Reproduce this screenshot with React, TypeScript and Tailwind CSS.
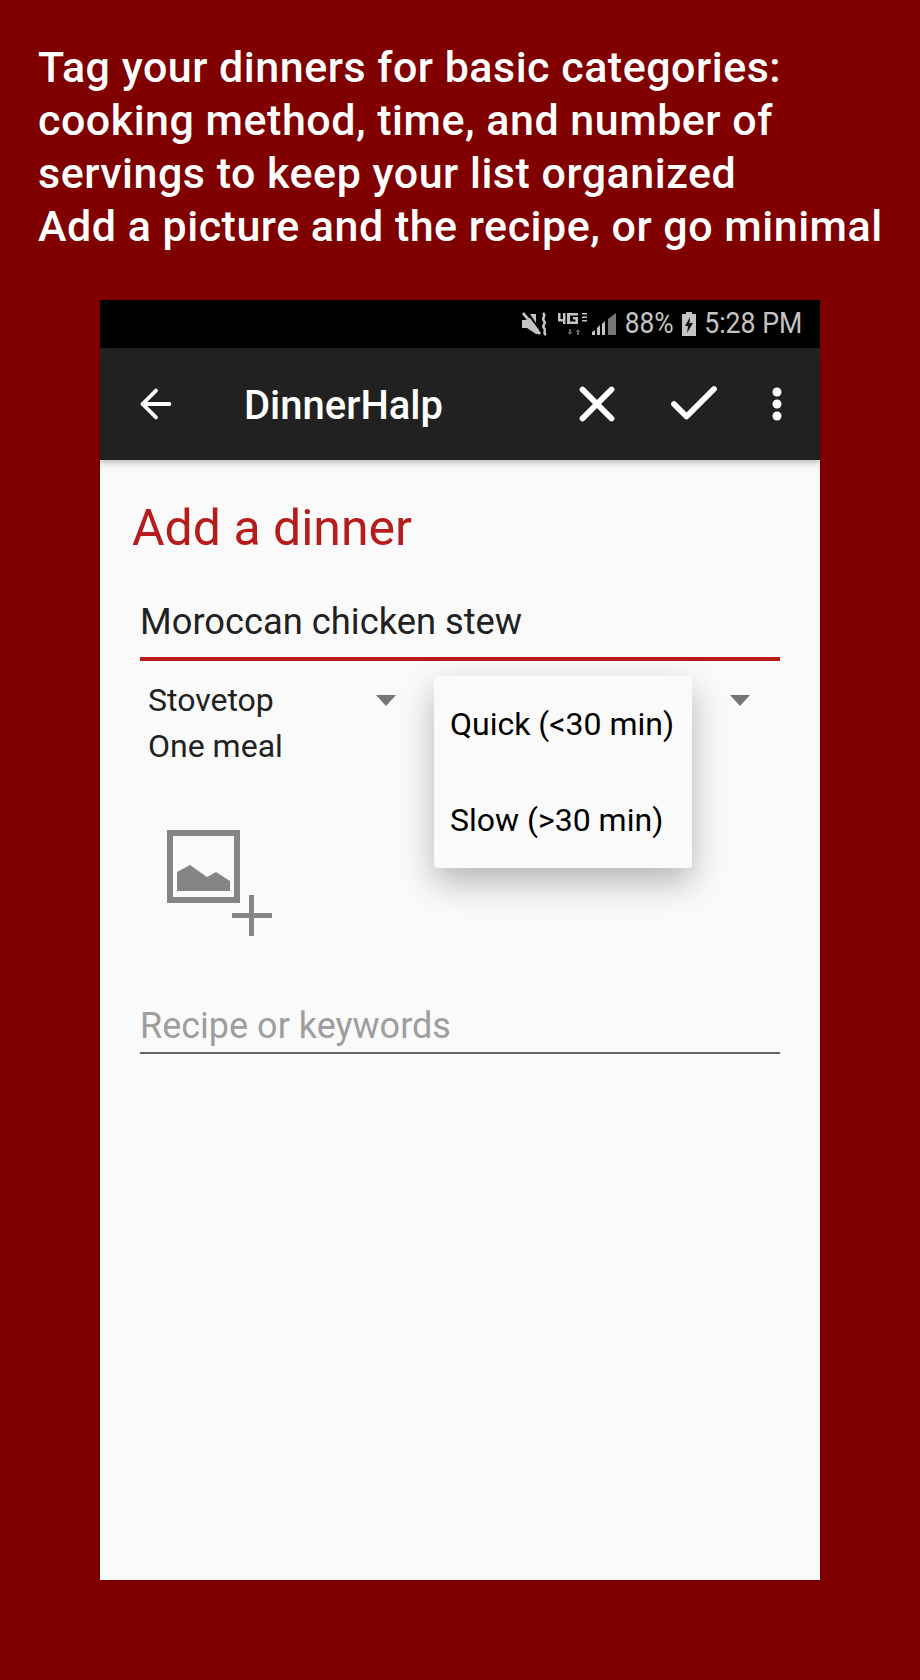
import { ArrowLeft, Check, X } from "lucide-react";

const roboto = "font-['Roboto',sans-serif]";

function Caret() {
  return <div className="w-0 h-0 border-x-[10px] border-x-transparent border-t-[11px] border-t-[#757575]" />;
}

function StatusIcons() {
  return (
    <svg width="96" height="25" viewBox="0 0 96 25" fill="#c4c4c4">
      {/* muted speaker */}
      <path d="M1 8h5l3-2 9 12v4h-3l-9-6H1z" />
      <path d="M9 2h6v9zM3 0l17 21-2 2L1 2z" />
      <path d="M22 1c4 3-2 5 1 8s-3 4 0 7-2 4 2 7" fill="none" stroke="#c4c4c4" strokeWidth="2.500" />
      {/* 4G LTE */}
      <path d="M37 1h2.500v6h2.500V1h2.500v11H42V9.500h-5z" />
      <path d="M46 1h11v2.500h-8v6h5.500V7.500H52V5h5v7H46z" />
      <path d="M61 1h5v1.500h-5zM61 4.500h5V6h-5zM61 8h5v1.500h-5z" />
      <path d="M49 23l-2.500-3H48v-3h2v3h1.500zM57 17l2.500 3H58v3h-2v-3h-1.500z" fill="#666" />
      {/* signal */}
      <path d="M71 23v-3l3-2v5zM76 23v-7l3-3v10zM81 23V12l3-3v14z" />
      <path d="M87 23V7l8-6v22z" fill="#777" />
    </svg>
  );
}

function BatteryIcon() {
  return (
    <svg width="16" height="24" viewBox="0 0 16 24" fill="#c4c4c4">
      <path d="M5 0h6v2h4v22H1V2h4z" />
      <path d="M9 5l-5 9h3l-1 7 6-10H8.500z" fill="#111" />
    </svg>
  );
}

function AddImageIcon() {
  return (
    <svg width="106" height="106" viewBox="0 0 106 106" fill="#858585">
      <path d="M0 0h73v73H0zM6 6v61h61V6z" fillRule="evenodd" />
      <path d="M10 42l13-7 17 12 9-5 14 9v10H10z" />
      <path d="M65 83h40v5H65zM82 65h5v41h-5z" />
    </svg>
  );
}

export default function App() {
  return (
    <div className={`${roboto} w-[920px] h-[1680px] bg-[#800000] flex flex-col overflow-hidden`}>
      <div className="pt-[41px] pl-[38px] text-[43px] leading-[53px] font-medium text-white tracking-[0.5px] whitespace-nowrap h-[300px]">
        <p>Tag your dinners for basic categories:</p>
        <p>cooking method, time, and number of</p>
        <p>servings to keep your list organized</p>
        <p>Add a picture and the recipe, or go minimal</p>
      </div>

      <div className="mx-[100px] h-[1280px] bg-[#fafafa] flex flex-col relative">
        {/* status bar */}
        <div className="h-[48px] bg-black flex items-center justify-end pr-[18px] text-[30px] text-[#c4c4c4] whitespace-nowrap">
          <StatusIcons />
          <span className="ml-[9px] w-[48px] flex justify-end leading-none pb-[2px]">
            <span className="scale-x-[0.88] origin-right">88%</span>
          </span>
          <div className="ml-[7px]">
            <BatteryIcon />
          </div>
          <span className="ml-[7px] w-[98px] flex justify-end leading-none pb-[2px]">
            <span className="scale-x-[0.89] origin-right">5:28 PM</span>
          </span>
        </div>

        {/* toolbar */}
        <div className="h-[112px] bg-[#212121] flex items-center text-white shadow-[0_3px_6px_rgba(0,0,0,0.25)]">
          <ArrowLeft className="ml-[33px] w-[46px] h-[46px]" strokeWidth={2} />
          <span className="ml-[65px] text-[40px] font-medium leading-none pt-[4px]">DinnerHalp</span>
          <X className="ml-[125px] w-[58px] h-[58px]" strokeWidth={2.4} />
          <Check className="ml-[38px] w-[60px] h-[60px]" strokeWidth={2.3} />
          <svg className="ml-[48px]" width="10" height="36" viewBox="0 0 10 36" fill="#fff">
            <circle cx="5" cy="6" r="4.500" />
            <circle cx="5" cy="18" r="4.500" />
            <circle cx="5" cy="30" r="4.500" />
          </svg>
        </div>

        {/* form */}
        <div className="flex-1 flex flex-col pt-[36px]">
          <h1 className="pl-[32px] text-[50px] leading-[64px] text-[#b71c1c]">Add a dinner</h1>

          <div className="mx-[40px] mt-[33px] h-[68px] pt-[2px] border-b-[4px] border-[#b71c1c] text-[36.300px] leading-[54px] text-[#212121]">
            Moroccan chicken stew
          </div>

          <div className="mt-[16px] pl-[48px] pr-[70px] text-[32px] leading-[46px] text-[#212121]">
            <div className="flex items-center justify-between">
              <span>Stovetop</span>
              <div className="flex gap-[334px] mr-0 ml-auto">
                <Caret />
                <Caret />
              </div>
            </div>
            <div className="flex items-start">
              <span>One meal</span>
              <div className="ml-[158px] mt-[10px]">
                <Caret />
              </div>
            </div>
          </div>

          <div className="mt-[61px] ml-[67px]">
            <AddImageIcon />
          </div>

          <div className="mx-[40px] mt-[64px] h-[54px] pt-[2px] border-b-[2px] border-[#666666] text-[36px] leading-[48px] text-[#9e9e9e]">
            Recipe or keywords
          </div>
        </div>

        {/* open dropdown */}
        <div className="absolute left-[334px] top-[376px] w-[258px] h-[192px] bg-[#fafafa] rounded-[4px] shadow-[0_14px_34px_rgba(0,0,0,0.28)] flex flex-col text-[32px] text-black">
          <div className="h-[96px] pl-[16px] flex items-center whitespace-nowrap">Quick (&lt;30 min)</div>
          <div className="h-[96px] pl-[16px] flex items-center whitespace-nowrap">Slow (&gt;30 min)</div>
        </div>
      </div>
    </div>
  );
}
